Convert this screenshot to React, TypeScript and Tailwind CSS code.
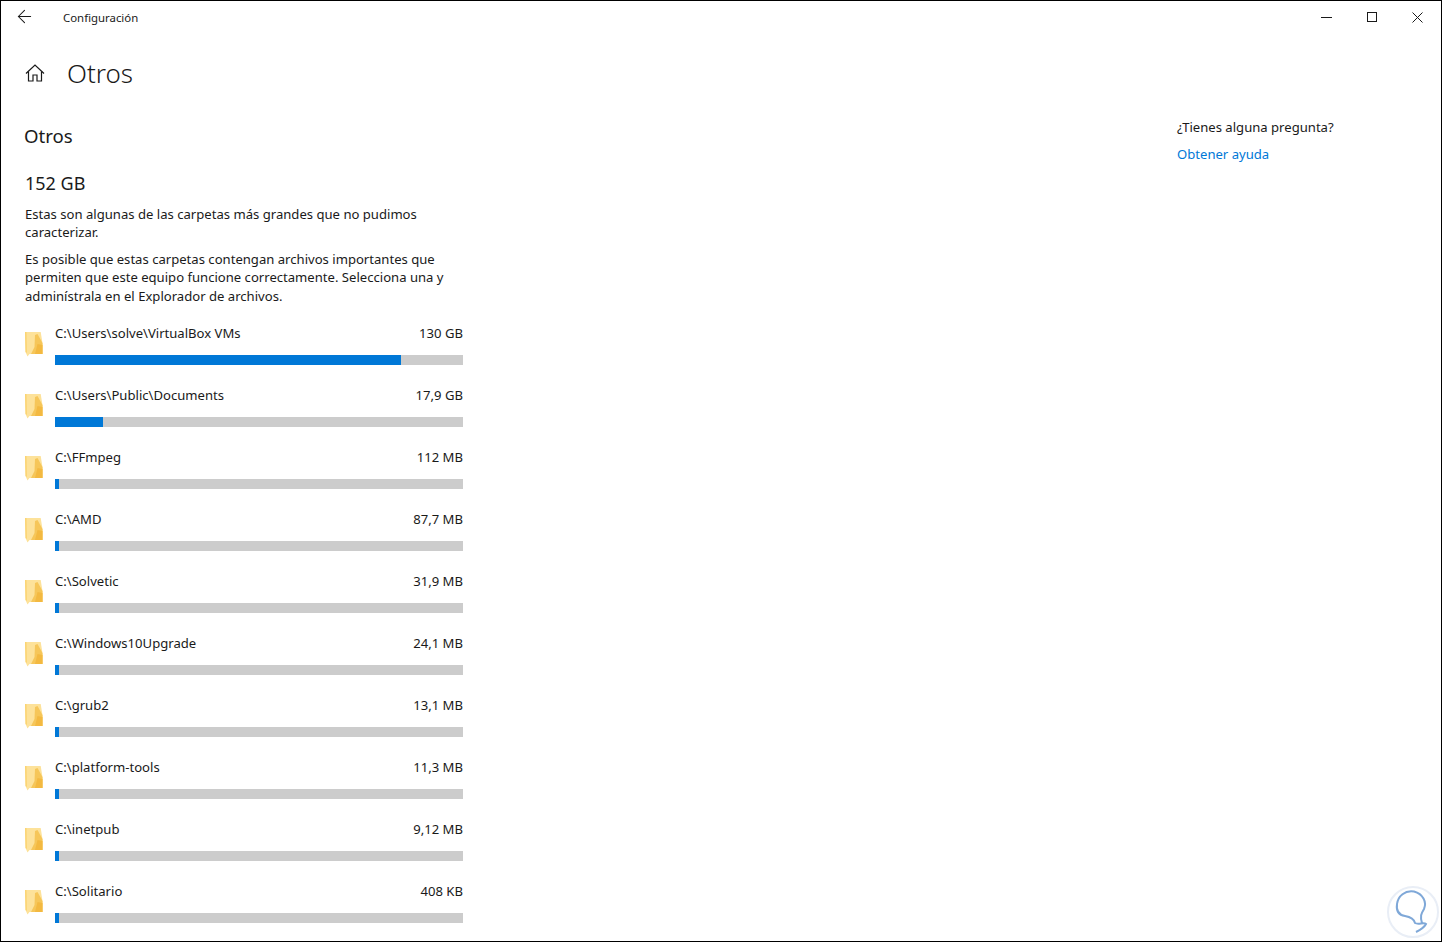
import React from 'react';
import { ArrowLeft } from 'lucide-react';

const folders = [
  { path: 'C:\\Users\\solve\\VirtualBox VMs', size: '130 GB', used: 346 },
  { path: 'C:\\Users\\Public\\Documents', size: '17,9 GB', used: 48 },
  { path: 'C:\\FFmpeg', size: '112 MB', used: 4 },
  { path: 'C:\\AMD', size: '87,7 MB', used: 4 },
  { path: 'C:\\Solvetic', size: '31,9 MB', used: 4 },
  { path: 'C:\\Windows10Upgrade', size: '24,1 MB', used: 4 },
  { path: 'C:\\grub2', size: '13,1 MB', used: 4 },
  { path: 'C:\\platform-tools', size: '11,3 MB', used: 4 },
  { path: 'C:\\inetpub', size: '9,12 MB', used: 4 },
  { path: 'C:\\Solitario', size: '408 KB', used: 4 },
];

const FolderIcon = () => (
  <svg width="18" height="25" viewBox="0 0 18 25" className="shrink-0">
    <path d="M0 0 L15.7 0 L17.5 11 L17.5 22 L4.5 22 L2.5 24.5 L0.5 20 Z" fill="#fde29a" />
    <path d="M10 3 L12.5 2 L17.5 11 L17.5 22 L6 22 L9.5 15 Z" fill="#f6c659" />
    <path d="M12.5 12 L17.5 13 L17.5 22 L10 22 Z" fill="#f3b941" />
    <path d="M0 0 L1.5 0 L2 21 L0.5 20 Z" fill="#fbd473" />
  </svg>
);

const HomeIcon = () => (
  <svg width="20" height="18" viewBox="0 0 20 18" fill="none" stroke="#1a1a1a" strokeWidth="1.2" className="shrink-0">
    <path d="M1 9.5 L10 1 L19 9.5" />
    <path d="M3.5 7.5 V17 H8 V11 H12 V17 H16.5 V7.5" />
  </svg>
);

const Watermark = () => (
  <div className="absolute left-[1386px] top-[885px] w-[52px] h-[52px] rounded-full border-2 border-[#e9eef6] bg-white">
    <svg width="52" height="52" viewBox="0 0 52 52" fill="none" stroke="#7fa8d8" strokeWidth="2" className="absolute -left-0.5 -top-0.5">
      <path d="M35 37 C33 30 34 28 37 23 C40 16 36 8 27 5.5 C18 4 11 10 10 18 C9 25 12 29 18 30 C24 31 27 33 28 37 C31 39 37 36 39 38 C37 42 33 44 29 46" />
    </svg>
  </div>
);

export default function App() {
  return (
    <div className="relative w-[1442px] h-[942px] bg-white border border-black overflow-hidden font-['Noto_Sans',sans-serif] text-[#1a1a1a]">
      {/* title bar */}
      <div className="flex items-center h-[32px] pl-[13px]">
        <ArrowLeft className="w-[21px] h-[21px] -mt-[1px]" strokeWidth={1.2} />
        <span className="ml-[28px] text-[11.4px] mt-[1px]">Configuración</span>
        <div className="ml-auto flex items-center gap-[35px] pr-[18px]">
          <div className="w-[11px] h-px bg-[#1a1a1a]" />
          <div className="w-[10px] h-[10px] border border-[#1a1a1a]" />
          <svg width="11" height="11" viewBox="0 0 11 11" stroke="#1a1a1a" strokeWidth="1">
            <path d="M0.5 0.5 L10.5 10.5 M10.5 0.5 L0.5 10.5" />
          </svg>
        </div>
      </div>

      <div className="flex justify-between">
        <main className="w-[438px] ml-[24px]">
          <div className="flex items-center h-[40px] mt-[20px]">
            <HomeIcon />
            <h1 className="ml-[22px] text-[26px] leading-[40px] font-light">Otros</h1>
          </div>
          <h2 className="mt-[30px] text-[18.6px] leading-[26px] -ml-px">Otros</h2>
          <div className="mt-[21px] text-[18px] leading-[26px]">152 GB</div>
          <p className="mt-[9px] text-[13.1px] leading-[18px]">
            Estas son algunas de las carpetas más grandes que no pudimos caracterizar.
          </p>
          <p className="mt-[8.5px] text-[13.1px] leading-[18.5px]">
            Es posible que estas carpetas contengan archivos importantes que permiten que este equipo funcione correctamente. Selecciona una y adminístrala en el Explorador de archivos.
          </p>
          <ul className="mt-[11.5px] flex flex-col">
            {folders.map((f) => (
              <li key={f.path} className="flex items-center h-[62px] gap-[12px]">
                <div className="-mt-[7px]">
                  <FolderIcon />
                </div>
                <div className="flex-1 pb-[8px]">
                  <div className="flex justify-between text-[13.1px] leading-[20px]">
                    <span>{f.path}</span>
                    <span>{f.size}</span>
                  </div>
                  <div className="mt-[12px] h-[10px] bg-[#cccccc]">
                    <div className="h-full bg-[#0078d7]" style={{ width: f.used }} />
                  </div>
                </div>
              </li>
            ))}
          </ul>
        </main>

        <aside className="w-[264px] pt-[61px] text-[13.1px]">
          <div className="leading-[20px] mt-[23px]">¿Tienes alguna pregunta?</div>
          <a className="block mt-[7px] leading-[20px] text-[#0078d7]">Obtener ayuda</a>
        </aside>
      </div>

      <Watermark />
    </div>
  );
}
